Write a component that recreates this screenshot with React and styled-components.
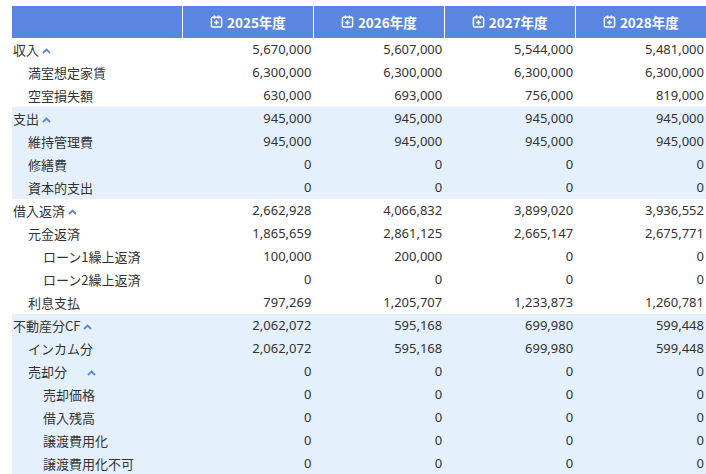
import React from "react";
import styled, { createGlobalStyle } from "styled-components";

const G = createGlobalStyle`
  body{margin:0;background:#fff;font-family:"Noto Sans CJK JP","Noto Sans",sans-serif;color:#333;}
`;
const Wrap = styled.div`padding:6px 0 0 12px;`;
const Table = styled.table`border-collapse:collapse;width:694px;table-layout:fixed;font-size:13px;`;
const Th = styled.th`
  background:#5a86e1;color:#fff;height:32px;padding:0;font-weight:700;font-size:13.5px;
  border-left:${p => (p.$first ? "none" : "1px solid #fff")};
  width:${p => (p.$first ? "170px" : "auto")};
`;
const HeadIn = styled.span`display:inline-flex;align-items:center;gap:4px;`;
const Tr = styled.tr`background:${p => (p.$blue ? "#e5f0fd" : "#fff")};`;
const Label = styled.td`height:23px;padding:0 0 0 ${p => 1 + p.$lv * 15}px;white-space:nowrap;line-height:23px;`;
const Num = styled.td`text-align:right;padding:0 2px 0 0;line-height:23px;font-family:"Noto Sans",sans-serif;`;
const Chev = styled.span`color:#5a86e1;font-size:10px;margin-left:${p => p.$ml || 3}px;display:inline-block;vertical-align:1px;`;

const Cal = () => (
  <svg width="13" height="13" viewBox="0 0 14 14">
    <rect x="1.5" y="2.5" width="11" height="10.5" rx="1.5" fill="none" stroke="#fff" strokeWidth="1.6" />
    <rect x="4" y="0.5" width="1.6" height="3.5" fill="#fff" />
    <rect x="8.4" y="0.5" width="1.6" height="3.5" fill="#fff" />
    <path d="M7 5.5v5M4.5 8h5" stroke="#fff" strokeWidth="1.6" />
  </svg>
);

const Up = ({ ml }) => (
  <Chev $ml={ml}>
    <svg width="9" height="6" viewBox="0 0 9 6"><path d="M1 5l3.5-3.5L8 5" fill="none" stroke="#5a86e1" strokeWidth="1.8" /></svg>
  </Chev>
);

const rows = [
  ["収入", 0, 1, 0, ["5,670,000", "5,607,000", "5,544,000", "5,481,000"]],
  ["満室想定家賃", 1, 0, 0, ["6,300,000", "6,300,000", "6,300,000", "6,300,000"]],
  ["空室損失額", 1, 0, 0, ["630,000", "693,000", "756,000", "819,000"]],
  ["支出", 0, 1, 1, ["945,000", "945,000", "945,000", "945,000"]],
  ["維持管理費", 1, 0, 1, ["945,000", "945,000", "945,000", "945,000"]],
  ["修繕費", 1, 0, 1, ["0", "0", "0", "0"]],
  ["資本的支出", 1, 0, 1, ["0", "0", "0", "0"]],
  ["借入返済", 0, 1, 0, ["2,662,928", "4,066,832", "3,899,020", "3,936,552"]],
  ["元金返済", 1, 0, 0, ["1,865,659", "2,861,125", "2,665,147", "2,675,771"]],
  ["ローン1繰上返済", 2, 0, 0, ["100,000", "200,000", "0", "0"]],
  ["ローン2繰上返済", 2, 0, 0, ["0", "0", "0", "0"]],
  ["利息支払", 1, 0, 0, ["797,269", "1,205,707", "1,233,873", "1,260,781"]],
  ["不動産分CF", 0, 1, 1, ["2,062,072", "595,168", "699,980", "599,448"]],
  ["インカム分", 1, 0, 1, ["2,062,072", "595,168", "699,980", "599,448"]],
  ["売却分", 1, 2, 1, ["0", "0", "0", "0"]],
  ["売却価格", 2, 0, 1, ["0", "0", "0", "0"]],
  ["借入残高", 2, 0, 1, ["0", "0", "0", "0"]],
  ["譲渡費用化", 2, 0, 1, ["0", "0", "0", "0"]],
  ["譲渡費用化不可", 2, 0, 1, ["0", "0", "0", "0"]],
];

export default function App() {
  return (
    <Wrap>
      <G />
      <Table>
        <thead>
          <tr>
            <Th $first />
            {["2025年度", "2026年度", "2027年度", "2028年度"].map(y => (
              <Th key={y}><HeadIn><Cal />{y}</HeadIn></Th>
            ))}
          </tr>
        </thead>
        <tbody>
          {rows.map(([l, lv, ch, blue, v]) => (
            <Tr key={l} $blue={blue}>
              <Label $lv={lv}>{l}{ch === 1 && <Up />}{ch === 2 && <Up ml={20} />}</Label>
              {v.map((x, i) => <Num key={i}>{x}</Num>)}
            </Tr>
          ))}
        </tbody>
      </Table>
    </Wrap>
  );
}
